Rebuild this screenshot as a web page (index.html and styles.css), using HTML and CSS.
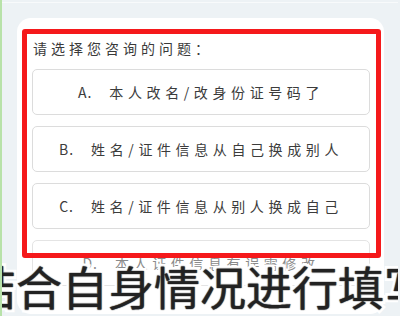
FILE: index.html
```html
<!DOCTYPE html>
<html lang="zh">
<head>
<meta charset="utf-8">
<link rel="stylesheet" href="styles.css">
</head>
<body>
<div class="screen">
  <div class="card">
    <div class="question">请选择您咨询的问题：</div>
    <div class="options">
      <div class="option"><span class="letter">A.</span><span class="label">本人改名/改身份证号码了</span></div>
      <div class="option"><span class="letter">B.</span><span class="label">姓名/证件信息从自己换成别人</span></div>
      <div class="option"><span class="letter">C.</span><span class="label">姓名/证件信息从别人换成自己</span></div>
      <div class="option faded"><span class="letter">D.</span><span class="label">本人证件信息有误需修改</span></div>
    </div>
  </div>
  <div class="highlight"></div>
  <div class="subtitle"><span>结合自身情况进行填写</span></div>
</div>
</body>
</html>
```

FILE: styles.css
```css
html, body {
  margin: 0;
  padding: 0;
}
body {
  width: 400px;
  height: 316px;
  overflow: hidden;
  background: #edf2f5;
  font-family: "Noto Sans CJK SC", "Noto Sans", sans-serif;
}
.screen {
  position: relative;
  width: 398px;
  height: 316px;
  border-left: 2px solid #b8e2a9;
  padding-top: 18px;
  box-sizing: border-box;
  overflow: hidden;
}
.screen::before {
  content: "";
  position: absolute;
  left: 0;
  right: 0;
  top: 2px;
  height: 1px;
  background: #f8fafb;
}
.card {
  margin-left: 15px;
  width: 367px;
  height: 296px;
  background: #ffffff;
  border-radius: 14px;
  padding: 20px 14px 0 15px;
  box-sizing: border-box;
}
.question {
  height: 20px;
  line-height: 20px;
  font-size: 14px;
  letter-spacing: 4px;
  color: #3a3a3a;
  white-space: nowrap;
  margin-left: 1px;
}
.options {
  margin-top: 11px;
  display: flex;
  flex-direction: column;
  gap: 11px;
}
.option {
  height: 46px;
  border: 1px solid #dcdcdc;
  border-radius: 5px;
  box-sizing: border-box;
  display: flex;
  align-items: center;
  justify-content: center;
  gap: 17px;
  font-size: 14px;
  color: #3c3c3c;
  white-space: nowrap;
}
.option .letter {
  letter-spacing: 1px;
}
.option .label {
  letter-spacing: 4.6px;
}
.option.faded {
  color: #8a8a8a;
  border-color: #e4e4e4;
}
.highlight {
  position: absolute;
  left: 20px;
  top: 29px;
  width: 359px;
  height: 229px;
  border: 5px solid #f5191b;
  border-radius: 3px;
  box-sizing: border-box;
}
.subtitle {
  position: absolute;
  left: -2px;
  top: 257px;
  width: 400px;
  display: flex;
  justify-content: center;
  white-space: nowrap;
}
.subtitle span {
  font-family: "Noto Sans CJK SC", sans-serif;
  font-size: 46px;
  line-height: 56px;
  color: #222222;
  -webkit-text-stroke: 6px #ffffff;
  paint-order: stroke fill;
  text-shadow: 0 0 1px #6a6a6a, 0 0 1px #6a6a6a, 0 0 1px #6a6a6a;
}
```
